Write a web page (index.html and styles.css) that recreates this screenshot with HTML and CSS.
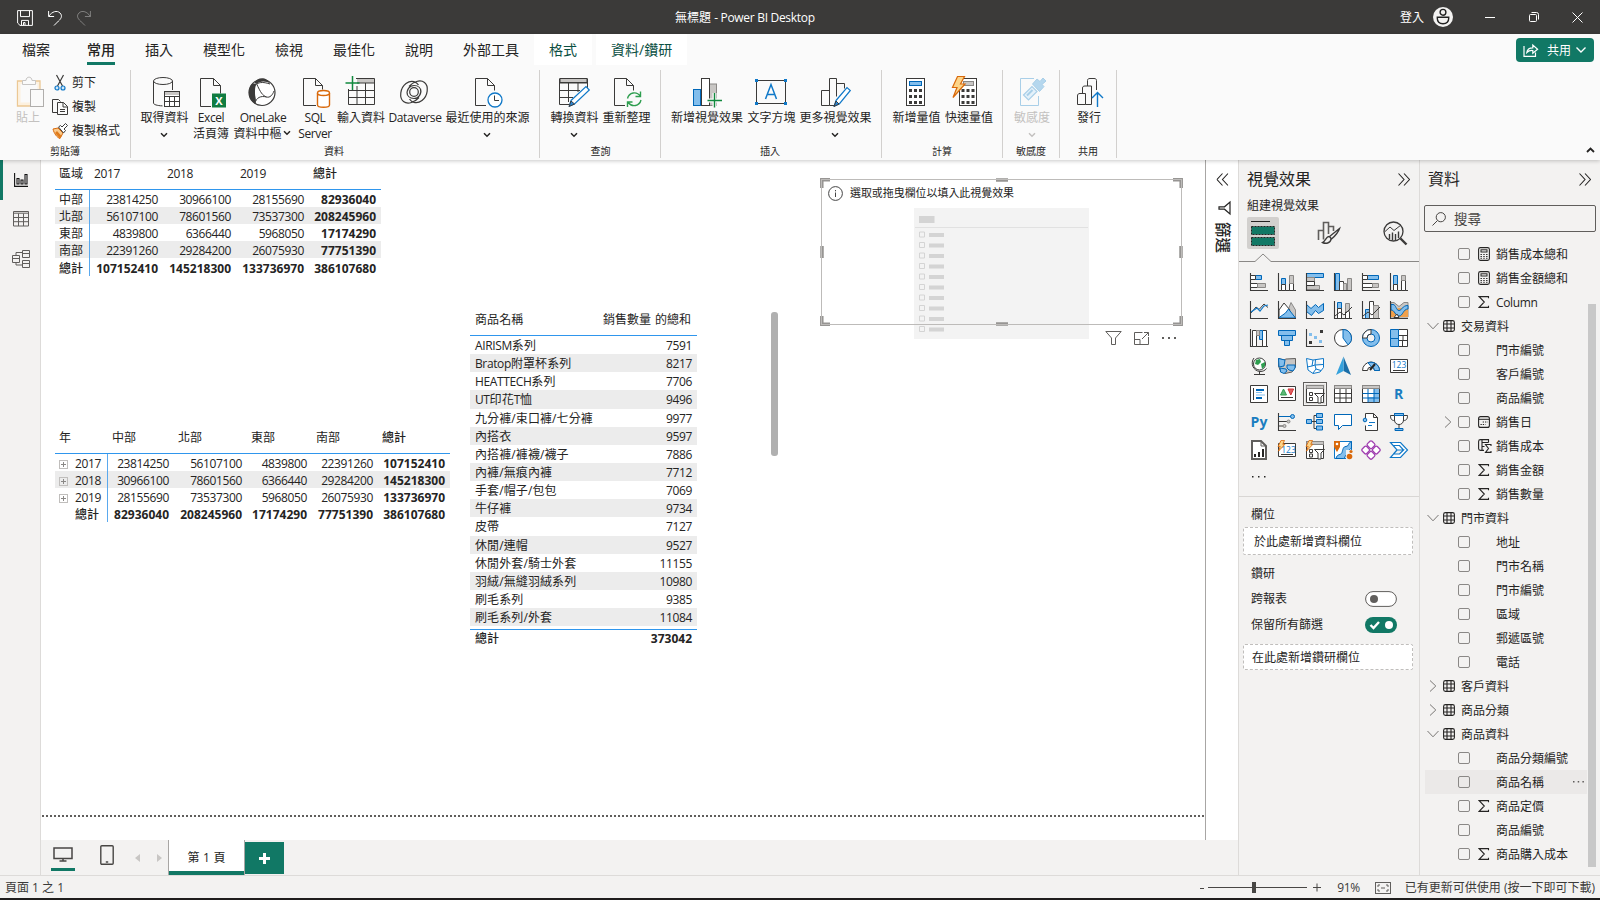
FILE: index.html
```html
<!DOCTYPE html>
<html lang="zh-Hant">
<head>
<meta charset="utf-8">
<title>無標題 - Power BI Desktop</title>
<link rel="stylesheet" href="styles.css">
</head>
<body>
<svg class="sprite" width="0" height="0">
  <symbol id="chev-d" viewBox="0 0 8 6"><path d="M1 1.2 4 4.2 7 1.2" fill="none" stroke="currentColor" stroke-width="1.5"/></symbol>
  <symbol id="dbl" viewBox="0 0 12 13"><path d="M.5.5 6 6.5.5 12.5M6 .5l5.5 6-5.5 6" fill="none" stroke="currentColor" stroke-width="1.1"/></symbol>
  <symbol id="open" viewBox="0 0 12 12"><path d="M.5 3 6 8.8 11.5 3" fill="none" stroke="#797775"/></symbol>
  <symbol id="closed" viewBox="0 0 12 12"><path d="M3 .5 8.8 6 3 11.5" fill="none" stroke="#797775"/></symbol>
  <symbol id="tbl" viewBox="0 0 12 12"><path d="M2.5.6h7a1.9 1.9 0 0 1 1.9 1.9v7a1.9 1.9 0 0 1-1.9 1.9h-7A1.9 1.9 0 0 1 .6 9.5v-7A1.9 1.9 0 0 1 2.5.6zM4 .6v10.8M8 .6v10.8M.6 4h10.8M.6 8h10.8" fill="none" stroke="#252423" stroke-width="1.1"/></symbol>
  <symbol id="sum" viewBox="0 0 12 12"><path d="M10.5 2.3V.6H1.2L6.3 6l-5.1 5.4h9.3V9.7" fill="none" stroke="#252423" stroke-width="1.1"/></symbol>
  <symbol id="calc" viewBox="0 0 12 14"><rect x=".6" y=".6" width="10.8" height="12.8" rx="1.8" fill="none" stroke="#252423" stroke-width="1.1"/><rect x="3" y="2.8" width="6" height="2.2" fill="none" stroke="#252423"/><path d="M2.5 7.5h7M2.5 9.5h7M2.5 11.3h7" stroke="#252423" stroke-dasharray="1.4 1.4"/></symbol>
  <symbol id="axis" viewBox="0 0 20 20"><path d="M1.5 1v17.5H19" fill="none" stroke="#3b3a39" stroke-width="1.1"/></symbol>
  <symbol id="bolt" viewBox="0 0 10 14"><path d="M4.5.5h4L6.5 5H9L1.5 13 3.5 7.5H1z" fill="#fcd58a" stroke="#d9690b"/></symbol>
</svg>

<div class="app">
  <header class="titlebar">
    <div class="quick">
      <svg width="16" height="16" viewBox="0 0 16 16" class="w"><path d="M.6.6h14.8v14.8H3L.6 13zM3.5.6v6h9v-6M4.500 15.400v-5h7v5M6.500 15v-2.500h1.500V15"/></svg>
      <svg width="14" height="16" viewBox="0 0 14 16" class="w"><path d="M.6 1v5.500h5.500M.8 6.200C4 1.500 9 0 12 3s.8 6-1.500 8L6 15.500"/></svg>
      <svg width="14" height="16" viewBox="0 0 14 16" class="w dim"><path d="M13.400 1v5.500H7.900M13.200 6.200C10 1.500 5 0 2 3s-.8 6 1.500 8L8 15.500"/></svg>
    </div>
    <div class="apptitle">無標題 <span class="lat">- Power BI Desktop</span></div>
    <div class="winctl">
      <span class="login">登入</span>
      <svg width="20" height="20" viewBox="0 0 20 20"><circle cx="10" cy="10" r="10" fill="#f3f2f1"/><circle cx="10" cy="5.3" r="2.9" fill="none" stroke="#222" stroke-width="1.4"/><path d="M4.300 10.300h11.400v1c0 3.500-2.500 5.400-5.700 5.400s-5.700-1.900-5.700-5.400z" fill="none" stroke="#222" stroke-width="1.4"/></svg>
      <svg class="min w" width="10" height="10" viewBox="0 0 10 10"><path d="M0 5.500h10"/></svg>
      <svg class="res w" width="10" height="10" viewBox="0 0 10 10"><rect x=".5" y="2.5" width="7" height="7" rx="1"/><path d="M2.500.5h5a2 2 0 0 1 2 2v5"/></svg>
      <svg class="cls w" width="11" height="11" viewBox="0 0 11 11"><path d="m.5.5 10 10m0-10-10 10"/></svg>
    </div>
  </header>

  <section class="ribbon">
    <nav class="tabs">
      <span class="file">檔案</span><span class="on">常用</span><span>插入</span><span>模型化</span><span>檢視</span><span>最佳化</span><span>說明</span><span>外部工具</span>
      <span class="ctx">格式</span><span class="ctx">資料/鑽研</span>
      <button class="share"><svg width="16" height="14" viewBox="0 0 16 14" class="w"><path d="M1 3v10.400h11.500V9.500M3.800 9.500c.4-3 2.500-4.700 6-4.700V2l4.800 4.200-4.800 4V7.500c-2.800-.2-4.500.4-6 2z" stroke-width="1.2"/></svg><span>共用</span><svg width="10" height="6" viewBox="0 0 10 6" class="w"><path d="m.5.5 4.500 4.500L9.500.5" stroke-width="1.4"/></svg></button>
    </nav>
    <div class="groups">
      <div class="group g-clip">
        <div class="items">
          <div class="btn off paste"><svg class="ic" viewBox="0 0 32 32"><path d="M8 5H2.500v25H16M20 5h5v8" fill="#fdf3e2" stroke="#ecc894" stroke-width="1.3"/><path d="M3.500 6H24v8h-8v15H3.500z" fill="#fdf1df"/><path d="M5.500 8h17v6H16v12.500H5.500z" fill="#fafafa"/><path d="M7.500 8.500v-4H11c.2-4.500 5.800-4.500 6 0h3.500v4z" fill="#fafafa" stroke="#c8c6c4"/><rect x="15.5" y="13.5" width="13" height="17" fill="#fafafa" stroke="#b0aeac"/></svg><span>貼上</span></div>
          <div class="small">
            <div><svg width="16" height="16" viewBox="0 0 16 16"><path d="M4.500 0 10.500 11M11.500 0l-6 11" stroke="#3b3a39" stroke-width="1.2"/><circle cx="5" cy="13" r="2" fill="#cfe6f8" stroke="#0f78c8" stroke-width="1.2"/><circle cx="11" cy="13" r="2" fill="#cfe6f8" stroke="#0f78c8" stroke-width="1.2"/></svg>剪下</div>
            <div><svg width="16" height="16" viewBox="0 0 16 16" class="k"><path d="M5.500 13.500H.5v-13h6l2 2M5.500 3.500h6l4 4v8h-10zM11 3.500V8h4.500M8 10.500h5M8 12.500h5"/></svg>複製</div>
            <div><svg width="16" height="16" viewBox="0 0 16 16"><path d="M1 6l5-1 5 5-3 5.500c-3-1-6-5-7-9.500z" fill="#f9c98b" stroke="#d9690b"/><path d="m5 8 4.500 5L8 15.500 3 10z" fill="#e07b1a"/><path d="m6.500 4 2-1.500L10 4l3.500-3.500 2 2L12 6l1.500 1.500L11.500 10z" fill="#fff" stroke="#3b3a39"/></svg>複製格式</div>
          </div>
        </div>
        <div class="gname">剪貼簿</div>
      </div>
      <div class="group g-data">
        <div class="items">
          <div class="btn w55"><svg class="ic k" viewBox="0 0 32 32"><path d="M5.500 5v22c0 1.600 3.500 2.600 9 2.900M24.500 5v9"/><ellipse cx="15" cy="5" rx="9.500" ry="3.500"/><rect x="16.500" y="15.500" width="15" height="15" fill="#fff"/><path d="M16.500 17.500h15" stroke="#c8c6c4" stroke-width="3"/><path d="M16.500 15.500h15v15h-15zM16.500 20.500h15M16.500 25.500h15M21.500 20v10M26.500 20v10"/></svg><span>取得資料</span><svg class="ch"><use href="#chev-d"/></svg></div>
          <div class="btn w38"><svg class="ic k" viewBox="0 0 32 32"><path d="M17 30.500H6.500v-28h13l7 7v8M19.500 2.500v7h7"/><rect x="18" y="17.500" width="14" height="14" fill="#107c41" stroke="none"/><text x="25" y="28.500" class="xl">X</text></svg><span class="lat">Excel</span><span>活頁簿</span></div>
          <div class="btn w66"><svg class="ic" viewBox="0 0 32 32"><circle cx="16" cy="16.500" r="13" fill="#fff" stroke="#3b3a39" stroke-width="1.2"/><path d="M5 9C1 16 3 24 9 27.500c2-4 0-6 0-10S9 10 10.500 8.500C8.500 7 7 7.500 5 9z" fill="#3b3a39"/><path d="M8.500 6.500C11 1 21 0 24.500 8 20 4.500 14 5 10 8z" fill="#3b3a39"/><path d="M10.500 7.500c4 9 6 12 10 13.500 3.500 1 6-2 7.500-6M9 27.500c1-6 6-8 11.500-6.500M24 8c-6-2-10-2-13.500 0" fill="none" stroke="#3b3a39"/></svg><span class="lat">OneLake</span><span class="hub">資料中樞<svg class="ch in"><use href="#chev-d"/></svg></span></div>
          <div class="btn w38"><svg class="ic k" viewBox="0 0 32 32"><path d="M18 29.500H5.500v-27h12l7 7v4M17.500 2.500v7h7"/><path d="M19.500 17v12c0 3 12 3 12 0V17" fill="#fff" stroke="#d9690b" stroke-width="1.4"/><ellipse cx="25.500" cy="17" rx="6" ry="2.500" fill="#fff" stroke="#d9690b" stroke-width="1.4"/></svg><span class="lat">SQL</span><span class="lat">Server</span></div>
          <div class="btn w54"><svg class="ic k" viewBox="0 0 32 32"><path d="M13 3h17v4H13z" fill="#c8c6c4" stroke="none"/><path d="M12 2.500h18.500v26h-26V13M13 7h17.500M4.500 14.500h26M4.500 21.500h26M13 10v18.500M21.500 7v21.500"/><path d="M8.500 0v14M1.500 7h14" stroke="#10893e" stroke-width="1.5"/></svg><span>輸入資料</span></div>
          <div class="btn w54"><svg class="ic k" viewBox="0 0 32 32" stroke-width="1.2"><circle cx="16" cy="16" r="4.300"/><path d="M21 21.500C17 26 10 29 5.500 25.500S2 12 8 7.500s11-1 12.500 1.500M11 10.500C15 6 22 3 26.500 6.500S30 20 24 24.500s-11 1-12.500-1.500M9.500 19c-1.500-5 2-9.500 6.500-9.500s7 3 7 6.500M22.500 13c1.500 5-2 9.500-6.500 9.500s-7-3-7-6.500"/></svg><span class="lat">Dataverse</span></div>
          <div class="btn w91"><svg class="ic k" viewBox="0 0 32 32"><path d="M15 29.500H4.500v-27h12l7 7v5M16.500 2.500v7h7"/><circle cx="24" cy="24" r="7" fill="#fff" stroke="#0f78c8" stroke-width="1.3"/><path d="M23.500 19.500v5H28"/></svg><span>最近使用的來源</span><svg class="ch"><use href="#chev-d"/></svg></div>
        </div>
        <div class="gname">資料</div>
      </div>
      <div class="group g-query">
        <div class="items">
          <div class="btn w51"><svg class="ic k" viewBox="0 0 32 32"><path d="M2 2.500h27v4H2z" fill="#c8c6c4"/><path d="M29.500 2.500v10M1.500 2.500v26H11M1.500 7h28M1.500 14.500H22M1.500 21.500H15M10.500 7v19M20 7v9"/><path d="m13 24.500 15-14 3.300 3.500-14.800 14-5 2z" fill="#fff" stroke="#0f78c8" stroke-width="1.2"/><path d="m13 25 3.500 3-5.500 2.500z" fill="#2b88d8"/></svg><span>轉換資料</span><svg class="ch"><use href="#chev-d"/></svg></div>
          <div class="btn w53"><svg class="ic k" viewBox="0 0 32 32"><path d="M15 29.500H4.500v-27h12l7 7v5M16.500 2.500v7h7"/><path d="M17.500 22.500c1.500-6 9-8 13-2M30.500 15.500V20.500H25.500M31 24c-1.500 6-9 8-13 2M17.500 31v-5h5" stroke="#2e9e4f" stroke-width="1.4"/></svg><span>重新整理</span></div>
        </div>
        <div class="gname">查詢</div>
      </div>
      <div class="group g-ins">
        <div class="items">
          <div class="btn w80"><svg class="ic k" viewBox="0 0 32 32"><rect x="3.500" y="13.500" width="7" height="16" fill="#83beec" stroke="#0067b8"/><rect x="18.500" y="8" width="8" height="21.500" fill="#c8c6c4" stroke="#8a8886"/><rect x="11.500" y="2.500" width="8" height="27" fill="#fff"/><path d="M24.500 17v15M17.500 24.500h14.500" stroke="#fafafa" stroke-width="4"/><path d="M24.500 17v14.500M17.500 24.500h14.500" stroke="#10893e" stroke-width="1.4"/></svg><span>新增視覺效果</span></div>
          <div class="btn w49"><svg class="ic k" viewBox="0 0 32 32"><rect x="1.500" y="4.500" width="29" height="23"/><path d="M10.500 23 16 8.500 21.500 23M12.300 18.500h7.400" stroke="#0f78c8" stroke-width="1.5"/><path d="M0 3h3v3H0zM29 3h3v3h-3zM0 26h3v3H0zM29 26h3v3h-3z" fill="#0f78c8" stroke="none"/></svg><span>文字方塊</span></div>
          <div class="btn w79"><svg class="ic k" viewBox="0 0 32 32"><path d="M10.500 29.500h-8v-15h8M10.500 29.500v-27h7v18M17.500 7.500h8v5M10.500 29.500H16"/><path d="m17 24.500 11-13 3.300 3-11 13.500-5 2z" fill="#fff" stroke="#0f78c8" stroke-width="1.2"/><path d="m17 25 3 3-5 2.500z" fill="#2b88d8"/></svg><span>更多視覺效果</span><svg class="ch"><use href="#chev-d"/></svg></div>
        </div>
        <div class="gname">插入</div>
      </div>
      <div class="group g-calc">
        <div class="items">
          <div class="btn w53"><svg class="ic k" viewBox="0 0 32 32"><rect x="6.500" y="2.500" width="18" height="27" fill="#fff"/><rect x="9.500" y="5.500" width="12" height="4" fill="#83beec" stroke="#0067b8"/><path d="M9 14.500h13.500M9 20.500h13.500M9 26.500h13.500" stroke-width="3" stroke-dasharray="3 2"/></svg><span>新增量值</span></div>
          <div class="btn w52"><svg class="ic k" viewBox="0 0 32 32"><rect x="7.500" y="2.500" width="17" height="27" fill="#fff"/><rect x="11.500" y="5.500" width="10" height="4" fill="#c8c6c4" stroke="#8a8886"/><path d="M9.500 14.500H23M9.500 20.500H23M9.500 26.500H23" stroke-width="3" stroke-dasharray="3 2"/><path d="M5.500.5h7L8.500 8H13L1 21.500 5 11.500H.5z" fill="#fcd58a" stroke="#d9690b" stroke-width="1.2"/></svg><span>快速量值</span></div>
        </div>
        <div class="gname">計算</div>
      </div>
      <div class="group g-sens">
        <div class="items">
          <div class="btn off w56"><svg class="ic" viewBox="0 0 32 32" fill="none" stroke="#a9cfe8"><path d="M22.500 20v9.500h-18v-27H18"/><path d="m7.500 19 8.500-8.500 5 5-8.500 8.500z" fill="#e4f1fa" stroke-width="1.2"/><path d="m11 19.500 5.500-5.500" stroke-width="2"/><path d="m16.500 8 4.500-5 3 2.500 3-3.500 3 3-4 3.500 2 2-4.500 5z" fill="#b5d7ee"/></svg><span>敏感度</span><svg class="ch"><use href="#chev-d"/></svg></div>
        </div>
        <div class="gname">敏感度</div>
      </div>
      <div class="group g-pub">
        <div class="items">
          <div class="btn w56"><svg class="ic k" viewBox="0 0 32 32"><path d="M4.500 28.500v-8.500c0-2 1-2.500 2.500-2.500h5.500v11zM9.500 17.500V12c0-1.500 1-2 2.500-2h6.500v18.500h-6M14.500 10V4.500c0-1.500 1-2 2.500-2h4c1.500 0 2.500.5 2.500 2V14"/><path d="M24.500 31V17M19 22l5.500-5.500L30 22" stroke="#0f78c8" stroke-width="1.4"/></svg><span>發行</span></div>
        </div>
        <div class="gname">共用</div>
      </div>
      <svg class="collapse" width="9" height="6" viewBox="0 0 9 6"><path d="m1 5 3.500-3.500L8 5" fill="none" stroke="#252423" stroke-width="1.8"/></svg>
    </div>
  </section>

  <div class="body">
    <aside class="rail">
      <div class="on"><svg width="14" height="14" viewBox="0 0 14 14"><path d="M.6 0v13.400H14M3 5.500h2v5.500H3zM7 7h2v4H7zM11 1.500h2V11h-2z" fill="none" stroke="#111" stroke-width="1.1"/></svg></div>
      <div><svg width="16" height="16" viewBox="0 0 16 16" class="g"><path d="M.5.5h15v14.500H.5zM.5 2.200h15M.5 6.500h15M.5 10.700h15M5.500 2.500V15M10.500 2.500V15"/></svg></div>
      <div><svg width="18" height="18" viewBox="0 0 18 18" class="g"><path d="M.5 5.500h7v7h-7zM.5 8.500h7M10.500.5h7v7h-7zM10.500 3.500h7M10.500 10.500h7v7h-7zM10.500 13.500h7M4 5.500v-3h6.500M4 12.500v2.500h6.500"/></svg></div>
    </aside>

    <main class="report">
      <div class="canvas">
        <table class="viz t1">
          <tr><th>區域</th><th class="lat">2017</th><th class="lat">2018</th><th class="lat">2019</th><th class="m">總計</th></tr>
          <tr><td>中部</td><td>23814250</td><td>30966100</td><td>28155690</td><td class="b">82936040</td></tr>
          <tr class="alt"><td>北部</td><td>56107100</td><td>78601560</td><td>73537300</td><td class="b">208245960</td></tr>
          <tr><td>東部</td><td>4839800</td><td>6366440</td><td>5968050</td><td class="b">17174290</td></tr>
          <tr class="alt"><td>南部</td><td>22391260</td><td>29284200</td><td>26075930</td><td class="b">77751390</td></tr>
          <tr class="sumrow"><td class="m">總計</td><td class="b">107152410</td><td class="b">145218300</td><td class="b">133736970</td><td class="b">386107680</td></tr>
        </table>

        <table class="viz t2">
          <tr><th>年</th><th>中部</th><th>北部</th><th>東部</th><th>南部</th><th class="m">總計</th></tr>
          <tr><td><i class="exp"></i>2017</td><td>23814250</td><td>56107100</td><td>4839800</td><td>22391260</td><td class="b">107152410</td></tr>
          <tr class="alt"><td><i class="exp"></i>2018</td><td>30966100</td><td>78601560</td><td>6366440</td><td>29284200</td><td class="b">145218300</td></tr>
          <tr><td><i class="exp"></i>2019</td><td>28155690</td><td>73537300</td><td>5968050</td><td>26075930</td><td class="b">133736970</td></tr>
          <tr><td class="m ind">總計</td><td class="b">82936040</td><td class="b">208245960</td><td class="b">17174290</td><td class="b">77751390</td><td class="b">386107680</td></tr>
        </table>

        <div class="viz t3">
          <div class="r head"><span>商品名稱</span><span>銷售數量 的總和</span></div>
          <div class="r"><span><b class="lat">AIRISM</b>系列</span><span>7591</span></div>
          <div class="r"><span><b class="lat">Bratop</b>附罩杯系列</span><span>8217</span></div>
          <div class="r"><span><b class="lat">HEATTECH</b>系列</span><span>7706</span></div>
          <div class="r"><span><b class="lat">UT</b>印花<b class="lat">T</b>恤</span><span>9496</span></div>
          <div class="r"><span>九分褲/束口褲/七分褲</span><span>9977</span></div>
          <div class="r"><span>內搭衣</span><span>9597</span></div>
          <div class="r"><span>內搭褲/褲襪/襪子</span><span>7886</span></div>
          <div class="r"><span>內褲/無痕內褲</span><span>7712</span></div>
          <div class="r"><span>手套/帽子/包包</span><span>7069</span></div>
          <div class="r"><span>牛仔褲</span><span>9734</span></div>
          <div class="r"><span>皮帶</span><span>7127</span></div>
          <div class="r"><span>休閒/連帽</span><span>9527</span></div>
          <div class="r"><span>休閒外套/騎士外套</span><span>11155</span></div>
          <div class="r"><span>羽絨/無縫羽絨系列</span><span>10980</span></div>
          <div class="r"><span>刷毛系列</span><span>9385</span></div>
          <div class="r"><span>刷毛系列/外套</span><span>11084</span></div>
          <div class="r total"><span>總計</span><span>373042</span></div>
        </div>
        <div class="vscroll"></div>

        <div class="slicer">
          <svg class="ph" width="175" height="131" viewBox="0 0 175 131"><rect width="175" height="131" fill="#f3f3f3"/><rect x="5" y="8" width="15.500" height="7" fill="#d4d4d4"/><path d="M1 19.500h173" stroke="#e1e1e1"/>
            <g fill="none" stroke="#d4d4d4"><path d="M5.500 24h5v5h-5zM5.500 34.500h5v5h-5zM5.500 45h5v5h-5zM5.500 55.500h5v5h-5zM5.500 66h5v5h-5zM5.500 76.500h5v5h-5zM5.500 87h5v5h-5zM5.500 97.500h5v5h-5zM5.500 108h5v5h-5zM5.500 118.500h5v5h-5z"/><path stroke-width="4" d="M15 27h15M15 37.500h15M15 48h15M15 58.500h15M15 69h15M15 79.500h15M15 90h15M15 100.500h15M15 111h15M15 121.500h15"/></g></svg>
          <div class="hint"><svg width="15" height="15" viewBox="0 0 15 15"><circle cx="7.500" cy="7.500" r="6.900" fill="none" stroke="#444"/><path d="M7.500 6.500v4.500M7.500 4v1.300" stroke="#444"/></svg>選取或拖曳欄位以填入此視覺效果</div>
          <svg class="frame" width="363" height="148" viewBox="0 0 363 148" fill="none"><g stroke="#979593" stroke-width="3.500"><path d="M10 1.800H1.800V10M353 1.800h8.200V10M10 146.200H1.800V138M353 146.200h8.200V138M176 2h12M176 146h12M2 68v12M361 68v12"/></g><rect x="1.500" y="1.500" width="360" height="145" stroke="#bdbbb9"/></svg>
          <div class="tools">
            <svg width="17" height="14" viewBox="0 0 17 14" class="g"><path d="M.8.5h15.400L10.500 7v6.500h-4V7z"/></svg>
            <svg width="15" height="13" viewBox="0 0 15 13" class="g"><path d="M8.500.5H.5v12h14V5M.5 7.500h5.500v5M10 .5h4.500V4M14.500.5 8 7"/></svg>
            <svg width="16" height="4" viewBox="0 0 16 4"><path d="M1 1h2v2H1zM7 1h2v2H7zM13 1h2v2h-2z" fill="#605e5c"/></svg>
          </div>
        </div>
        <div class="pageline"></div>
      </div>
      <aside class="filters">
        <svg width="13" height="13" viewBox="0 0 12 13" class="flip"><use href="#dbl"/></svg>
        <svg width="13" height="14" viewBox="0 0 13 14" class="fun"><path d="M12 1v12L6.500 8.200H1V5.800h5.500z" fill="none" stroke="#252423" stroke-width="1.2"/></svg>
        <span>篩選</span>
      </aside>
      <footer class="pages">
        <div class="view on"><svg width="20" height="15" viewBox="0 0 20 15"><path d="M1 1h18v10.500H1zM10 11.500V14M6.500 14h7" fill="none" stroke="#484644" stroke-width="1.5"/></svg></div>
        <div class="view ph2"><svg width="14" height="20" viewBox="0 0 14 20"><rect x=".8" y=".8" width="12.400" height="18.400" rx="1" fill="none" stroke="#484644" stroke-width="1.4"/><path d="M5.800 17h2.400" stroke="#484644" stroke-width="1.5"/></svg></div>
        <svg class="ar" width="5" height="8" viewBox="0 0 5 8"><path d="M5 0v8L0 4z" fill="#c8c6c4"/></svg>
        <svg class="ar" width="5" height="8" viewBox="0 0 5 8"><path d="M0 0v8l5-4z" fill="#c8c6c4"/></svg>
        <div class="page">第 1 頁</div>
        <div class="add"><svg width="11" height="11" viewBox="0 0 11 11"><path d="M5.500 0v11M0 5.500h11" stroke="#fff" stroke-width="3"/></svg></div>
      </footer>
    </main>

    <aside class="vis">
      <div class="phead"><span>視覺效果</span><svg width="12" height="13"><use href="#dbl"/></svg></div>
      <div class="sub">組建視覺效果</div>
      <div class="modes">
        <div class="mode on"><svg width="26" height="28" viewBox="0 0 26 28"><path d="M1 2.500h19" stroke="#252423"/><rect x="1.500" y="7.500" width="23" height="8" fill="#117865" stroke="#252423" stroke-dasharray="2 1"/><rect x="1.500" y="18.500" width="23" height="8" fill="#117865" stroke="#252423" stroke-dasharray="2 1"/></svg></div>
        <div class="mode"><svg width="24" height="24" viewBox="0 0 24 24" class="k"><path d="M1.500 19v-9.500h5v9M6.500 16V1.500h5V13M11.500 5.500h5V10" stroke="#605e5c" stroke-width="1.6"/><path d="M22.500 7.500 12.500 15.500l2 2.500C17.500 15.500 21 12 22.500 7.500zM12 15.500c-3 0-3 4-6.500 6 3 1.500 8 1 8.500-3.500" fill="#f3f2f1" stroke-width="1.4"/></svg></div>
        <div class="mode"><svg width="26" height="26" viewBox="0 0 26 26" class="k"><circle cx="11.500" cy="11.500" r="9.500" stroke-width="1.3"/><path d="M2.500 12 8 7l4 3.500L19 5"/><path d="M7.500 14v5M10.500 12.500v7.500M13.500 14v6M16.500 11.500V18" stroke-width="1.4"/><path d="m18.500 18.500 6 6" stroke-width="2.400"/></svg></div>
      </div>
      <svg class="notch" width="180" height="9" viewBox="0 0 180 9"><path d="M0 8.500h16l8-7.500 8 7.500h148" fill="none" stroke="#8a8886"/></svg>
      <div class="gallery">
        <svg viewBox="0 0 20 20"><use href="#axis"/><path class="bl" d="M6.500 3.500h6v4h-6z"/><path class="wh" d="M1.500 3.500h5v4h-5zM1.500 11.500h7v4h-7z"/><path class="gy" d="M8.500 11.500h8v4h-8z"/></svg>
        <svg viewBox="0 0 20 20"><use href="#axis"/><path class="bl" d="M4.500 6.500h4v6h-4z"/><path class="wh" d="M4.500 12.500h4v6h-4zM12.500 11.500h4v7h-4z"/><path class="gy" d="M12.500 3.500h4v8h-4z"/></svg>
        <svg viewBox="0 0 20 20"><path class="bl" d="M1.500 1.500h17v4h-17z"/><path class="gy" d="M1.500 5.500h8v4h-8zM1.500 13.500h13v4h-13z"/><path class="wh" d="M1.500 9.500h8v4h-8z"/><use href="#axis"/></svg>
        <svg viewBox="0 0 20 20"><path class="bl" d="M2.500 1.500h4v17h-4z"/><path class="wh" d="M6.500 9.500h4v9h-4z"/><path class="gy" d="M10.500 11.500h3v7h-3zM14.500 6.500h4v12h-4z"/><use href="#axis"/></svg>
        <svg viewBox="0 0 20 20"><use href="#axis"/><path class="bl" d="M6.500 3.500h11v4h-11z"/><path class="wh" d="M1.500 3.500h5v4h-5zM1.500 11.500h10v4h-10z"/><path class="gy" d="M11.500 11.500h6v4h-6z"/></svg>
        <svg viewBox="0 0 20 20"><use href="#axis"/><path class="bl" d="M4.500 3.500h4v9h-4z"/><path class="wh" d="M4.500 12.500h4v6h-4zM12.500 8.500h4v10h-4z"/><path class="gy" d="M12.500 3.500h4v5h-4z"/></svg>

        <svg viewBox="0 0 20 20"><use href="#axis"/><path class="ln" d="m2 13 5-6 3 2.500L15 4l4 3.500"/><path class="lb" d="m2 12 6-4 3 3 4-5 4-1"/></svg>
        <svg viewBox="0 0 20 20"><path class="gy" d="m8 18 6-15.500L18.500 10v8z"/><path class="wh" d="M2 10 7 3l6 7-6 8H2z"/><path class="bl" d="m1.500 18 7-5 3-4 7 9z"/><use href="#axis"/></svg>
        <svg viewBox="0 0 20 20"><path class="bl" d="M1.500 4.500 6 8.500l4.500-4 3 3 5-4v7l-5 3-3-3-4 5-5-4z"/><use href="#axis"/></svg>
        <svg viewBox="0 0 20 20"><path class="bl" d="M4.500 2.500h4v6h-4z"/><path class="wh" d="M4.500 8.500h4v10h-4zM12.500 11.500h4v7h-4z"/><path class="gy" d="M12.500 3.500h4v8h-4z"/><use href="#axis"/><path class="ln" d="m2 16 5-4 4 3 8-8"/></svg>
        <svg viewBox="0 0 20 20"><path class="bl" d="M4.500 9.500h4v9h-4z"/><path class="wh" d="M8.500 1.500h4v17h-4z"/><path class="gy" d="M12.500 5.500h5v13h-5z"/><use href="#axis"/><path class="ln" d="m2 16 5-4 4 3 8-8"/></svg>
        <svg viewBox="0 0 20 20"><path class="gy" d="M2 2.500h3l5 4 5-4h4V17H2z"/><path d="M2 9h4l4-1h9v9H2z" fill="#f0a04b"/><path class="bl" d="M2 4.500h2c3 0 3 6 6 6s3-5 9-5V9c-5 0-5 7-9 7s-4-6-8-6z"/><path class="wh" d="M5 17.500 8 14l2 3.500z"/><use href="#axis"/></svg>

        <svg viewBox="0 0 20 20"><use href="#axis"/><path class="wh" d="M3.500 2.500h4v16h-4zM13.500 2.500h4v16h-4z"/><path class="bl" d="M10.500 2.500h3v9h-3z"/><path class="gy" d="M7.500 2.500h3v5h-3z"/></svg>
        <svg viewBox="0 0 20 20"><path class="bl" d="M1.500 2.500h17v5h-17zM4.500 7.500h11v5h-11zM7.500 12.500h5v5h-5z"/></svg>
        <svg viewBox="0 0 20 20"><use href="#axis"/><path d="M4 5h3v3H4zM9 8h3v3H9zM14 12h3v3h-3z" fill="#83beec"/><path d="M15 2h3v3h-3zM4 13h3v3H4z" fill="#3b3a39"/></svg>
        <svg viewBox="0 0 20 20"><circle class="wh" cx="10" cy="10" r="8.500"/><path class="bl" d="M10 10V1.500a8.500 8.500 0 0 1 5 15.300z"/></svg>
        <svg viewBox="0 0 20 20"><circle class="bl" cx="10" cy="10" r="8.500"/><circle cx="10" cy="10" r="4" fill="#f3f2f1" stroke="#0067b8"/><path class="wh" d="M10 1.500A8.500 8.500 0 0 0 1.500 10H6a4 4 0 0 1 4-4z"/></svg>
        <svg viewBox="0 0 20 20"><path class="wh" d="M9.500 1.500h9v17h-9zM9.500 7.500h9M14 7.500v5M9.500 12.500h9M13.500 12.500v6"/><path class="bl" d="M1.500 1.500h8v9h-8zM1.500 10.500h8v8h-8z"/></svg>

        <svg viewBox="0 0 20 20"><circle cx="10.500" cy="8" r="6" fill="#fff" stroke="#3b3a39"/><path d="M7 4l4-1 1 3-3 3-3-1zM12 8l4-2v4l-3 3z" fill="#2e9e4f"/><path class="ln" d="M5 2C1 7 4 15 11 15.500c3 0 5-1 6.500-3M10.500 15.500v3M5 18.500h11"/></svg>
        <svg viewBox="0 0 20 20"><path d="M1.500 2.500 7 4l2-1 9.500-.5v8.500L15 16l-7 1.500L3 14l-1.500-4z" fill="#c8c6c4" stroke="#605e5c"/><path class="bl" d="M1.500 2.500 8 4l-1 6-5 1zM10 9h8v3l-2 3-4-1-2-2zM3 12l6 1 1 2-3 2.500L3.500 16z"/></svg>
        <svg viewBox="0 0 20 20"><path d="M1.500 2.500 8 4l10.500-1.500v9L15 16l-7 1.500L3 14zM8 4 7 10l-5 1M10.500 3.500 10 9l8-.5M7 10l3-1 1 4-3 4M11 13l5 1.500" fill="#fff" stroke="#0f78c8"/></svg>
        <svg viewBox="0 0 20 20"><path d="M10.500.5 18 19l-7.500-4z" fill="#1b6ea8"/><path d="M10.500.5 3 19l7.500-4z" fill="#35a2dd"/></svg>
        <svg viewBox="0 0 20 20"><path class="wh" d="M1.500 14.500a8.500 8.500 0 0 1 17 0h-5a3.500 3.500 0 0 0-7 0z"/><path class="bl" d="M7 6.800a8.500 8.500 0 0 1 11.500 7.700h-5a3.500 3.500 0 0 0-3-3.500z"/><path d="m9 14 5-6" stroke="#252423" stroke-width="2"/></svg>
        <svg viewBox="0 0 20 20"><path class="wh" d="M1.500 3.500h17v13h-17z"/><text x="10" y="12.200" class="n">123</text><path class="ln" d="M4 14.500h12"/></svg>

        <svg viewBox="0 0 20 20"><path class="wh" d="M1.500 1.500h17v17h-17z"/><path class="ln" d="M4.500 4v12"/><path d="M7 6h8M7 14h6" stroke="#0067b8" stroke-width="2"/><path d="M7 8.500h6M7 11h9" stroke="#83beec"/></svg>
        <svg viewBox="0 0 20 20"><path class="wh" d="M1.500 2.500h17v14h-17z"/><path d="m3.500 11 3-6 3 6z" fill="#5fb878" stroke="#2e9e4f"/><path d="m11 5 2.800 6 2.800-6z" fill="#e06060" stroke="#d13438"/><path class="ln" d="M4 13.500h12"/></svg>
        <svg viewBox="0 0 20 20" class="sel"><path class="wh" d="M1.500 1.500h17v17h-17z"/><path d="M1.500 1.500h17v3h-17z" class="gy"/><path class="ln" d="M4.500 8.500h3v3h-3zM4.500 13.500h3v3h-3z"/><path class="wh" d="M9.500 9.500h10L16 13v6h-3v-6z"/></svg>
        <svg viewBox="0 0 20 20"><path class="wh" d="M1.500 1.500h17v17h-17z"/><path class="ln" d="M1.500 9.500h17M1.500 14h17M7 4.500v14M13 4.500v14"/><path class="gy" d="M1.500 1.500h17v3h-17z"/></svg>
        <svg viewBox="0 0 20 20"><path class="wh" d="M1.500 1.500h17v17h-17z"/><path d="M7 13h6v5H7zM13 5h5v13h-5z" fill="#83beec"/><path d="M1.500 9.500h17M1.500 14h17M7 4.500v14M13 4.500v14" stroke="#0067b8"/><path class="gy" d="M1.500 1.500h17v3h-17z"/></svg>
        <svg viewBox="0 0 20 20"><text x="9.500" y="14.500" class="t">R</text></svg>

        <svg viewBox="0 0 20 20"><text x="10" y="14.500" class="t py">Py</text></svg>
        <svg viewBox="0 0 20 20"><use href="#axis"/><path d="M2 4.500h12" stroke="#0067b8"/><circle class="bl" cx="15.500" cy="4.500" r="2"/><path class="ln" d="M2 9.500h8M2 14h4"/><circle class="gy" cx="11.500" cy="9.500" r="1.500"/><circle class="gy" cx="7.500" cy="14" r="1.500"/></svg>
        <svg viewBox="0 0 20 20"><path class="ln" d="M6 9.500h6M9 3.500h3M9 16.500h3M9 3.500v13"/><path class="bl" d="M1.500 7.500h5v4h-5zM11.500 1.500h6v4h-6zM11.500 7.500h6v4h-6zM11.500 14h6v4h-6z"/></svg>
        <svg viewBox="0 0 20 20"><path d="M1.500 2.500h17v11h-9l-4 4v-4h-4z" fill="#fff" stroke="#0067b8"/></svg>
        <svg viewBox="0 0 20 20"><path class="wh" d="M4.500 1.500h8l4 4v13h-12v-5M12.500 1.500v4h4M4.500 6V1.500"/><circle class="bl" cx="4" cy="8" r="1.800"/><path d="M8 10.500h6M7 13.500h4" stroke="#0f78c8"/></svg>
        <svg viewBox="0 0 20 20"><path class="wh" d="M5.500 1.500h9V8c0 6-9 6-9 0zM5.500 3.500h-4c0 4 1.500 5 4 5M14.500 3.500h4c0 4-1.500 5-4 5M10 12.500V16"/><path class="bl" d="M5.500 1.500h9v2h-9zM6 16.500h8v2H6z"/></svg>

        <svg viewBox="0 0 20 20"><path d="M3 1h9l5 5v13H3z" fill="#fff" stroke="#605e5c" stroke-width="2"/><path d="M12 1v5h5" fill="none" stroke="#605e5c"/><path d="M5 14h2v3H5zM9 12h2v5H9zM13 9h2v8h-2z" fill="#252423"/></svg>
        <svg viewBox="0 0 20 20"><path class="wh" d="M1.500 3.500h17v13h-17z"/><text x="11.500" y="12.700" class="n">123</text><path class="ln" d="M4 14.500h12"/><use href="#bolt" width="9" height="12"/></svg>
        <svg viewBox="0 0 20 20"><path class="wh" d="M1.500 1.500h17v17h-17z"/><path d="M1.500 1.500h17v3h-17z" class="gy"/><path class="ln" d="M4.500 9.500h3v3h-3zM4.500 14h3v3h-3z"/><path class="wh" d="M9.500 9.500h10L16 13v6h-3v-6z"/><use href="#bolt" width="9" height="12"/></svg>
        <svg viewBox="0 0 20 20"><path d="M1.500 1.500h17v17h-17z" fill="#fff" stroke="#0f78c8"/><path class="bl" d="M3 18.500c1-5 5-3 6-6s1-6 4-6 2-4 5.500-5v7c-3 0-3 5-5 6s-1 4-3 4z"/><path d="M1 1h6v6l-3 5-3-5z" fill="#d9690b"/><circle cx="4" cy="4" r="1.300" fill="#fff"/><path d="M13 10h7v10h-7z" fill="#f3f2f1"/><circle cx="16.500" cy="16.500" r="2.800" fill="#d9690b"/><circle cx="18" cy="11.500" r="1.600" fill="#d9690b"/></svg>
        <svg viewBox="0 0 20 20"><g fill="#fff" stroke="#a03fb0" stroke-width="1.3"><rect x="6.800" y="1.500" width="6.400" height="6.400" rx="1.500" transform="rotate(45 10 4.700)"/><rect x="1.500" y="6.800" width="6.400" height="6.400" rx="1.500" transform="rotate(45 4.700 10)"/><rect x="12.100" y="6.800" width="6.400" height="6.400" rx="1.500" transform="rotate(45 15.300 10)"/><rect x="6.800" y="12.100" width="6.400" height="6.400" rx="1.500" transform="rotate(45 10 15.300)"/></g></svg>
        <svg viewBox="0 0 20 20"><path d="M1.500 2.500h10l7 7.500-7 7.500h-10L4.500 14h6l4-4H8zM4.500 5.500h6l4 4.500M8 10l-3.500 4" fill="#fff" stroke="#0f78c8" stroke-width="1.2"/></svg>
      </div>
      <svg class="dots" width="16" height="4" viewBox="0 0 16 4"><path d="M1 1h1.500v1.500H1zM7 1h1.500v1.500H7zM13 1h1.500v1.500H13z" fill="#252423"/></svg>
      <div class="wells">
        <div class="wl">欄位</div>
        <div class="drop d1">於此處新增資料欄位</div>
        <div class="wl l2">鑽研</div>
        <div class="opt">跨報表<svg width="32" height="16" viewBox="0 0 32 16"><rect x=".6" y=".6" width="30.800" height="14.800" rx="7.400" fill="#fff" stroke="#605e5c"/><circle cx="9" cy="8" r="4" fill="#605e5c"/></svg></div>
        <div class="opt">保留所有篩選<svg width="32" height="16" viewBox="0 0 32 16"><rect width="32" height="16" rx="8" fill="#117865"/><path d="m5.500 8 3 3L14 5" fill="none" stroke="#fff" stroke-width="2.400"/><circle cx="24" cy="8" r="4" fill="#fff"/></svg></div>
        <div class="drop d2">在此處新增鑽研欄位</div>
      </div>
    </aside>

    <aside class="data">
      <div class="phead"><span>資料</span><svg width="12" height="13"><use href="#dbl"/></svg></div>
      <div class="search"><svg width="14" height="14" viewBox="0 0 14 14"><circle cx="8.800" cy="5.200" r="4.600" fill="none" stroke="#484644"/><path d="M5.500 8.500.5 13.500" stroke="#484644"/></svg>搜尋</div>
      <div class="tree">
        <div class="f"><i></i><em><svg width="12" height="14"><use href="#calc"/></svg></em>銷售成本總和</div>
        <div class="f"><i></i><em><svg width="12" height="14"><use href="#calc"/></svg></em>銷售金額總和</div>
        <div class="f"><i></i><em><svg width="12" height="12"><use href="#sum"/></svg></em><span class="lat">Column</span></div>
        <div class="t"><svg><use href="#open"/></svg><svg><use href="#tbl"/></svg>交易資料</div>
        <div class="f"><i></i><em></em>門市編號</div>
        <div class="f"><i></i><em></em>客戶編號</div>
        <div class="f"><i></i><em></em>商品編號</div>
        <div class="f date"><svg class="dc" width="12" height="12"><use href="#closed"/></svg><i></i><em><svg width="12" height="12" viewBox="0 0 12 12"><rect x=".6" y=".6" width="10.800" height="10.800" rx="2" fill="none" stroke="#252423" stroke-width="1.1"/><path d="M.6 3.300h10.800" stroke="#252423"/><path d="M4.700 6h5M2.500 8.500h5" stroke="#252423" stroke-width="1.2" stroke-dasharray="1.300 1"/></svg></em>銷售日</div>
        <div class="f"><i></i><em><svg width="14" height="14" viewBox="0 0 14 14"><path d="M6 11.400H2.500A1.900 1.900 0 0 1 .6 9.500v-7A1.900 1.900 0 0 1 2.500.6h8v3M4 .6v10.800M4 3.500h6.500M4 7.500h2.500M13 7V5.500H7.500L10.500 9.500l-3 3.900H13V12" fill="none" stroke="#252423" stroke-width="1.1"/></svg></em>銷售成本</div>
        <div class="f"><i></i><em><svg width="12" height="12"><use href="#sum"/></svg></em>銷售金額</div>
        <div class="f"><i></i><em><svg width="12" height="12"><use href="#sum"/></svg></em>銷售數量</div>
        <div class="t"><svg><use href="#open"/></svg><svg><use href="#tbl"/></svg>門市資料</div>
        <div class="f"><i></i><em></em>地址</div>
        <div class="f"><i></i><em></em>門市名稱</div>
        <div class="f"><i></i><em></em>門市編號</div>
        <div class="f"><i></i><em></em>區域</div>
        <div class="f"><i></i><em></em>郵遞區號</div>
        <div class="f"><i></i><em></em>電話</div>
        <div class="t"><svg><use href="#closed"/></svg><svg><use href="#tbl"/></svg>客戶資料</div>
        <div class="t"><svg><use href="#closed"/></svg><svg><use href="#tbl"/></svg>商品分類</div>
        <div class="t"><svg><use href="#open"/></svg><svg><use href="#tbl"/></svg>商品資料</div>
        <div class="f"><i></i><em></em>商品分類編號</div>
        <div class="f hov"><i></i><em></em>商品名稱<svg class="more" width="11" height="2" viewBox="0 0 11 2"><path d="M0 0h1.500v1.500H0zM4.700 0h1.500v1.500H4.700zM9.400 0h1.500v1.500H9.400z" fill="#605e5c"/></svg></div>
        <div class="f"><i></i><em><svg width="12" height="12"><use href="#sum"/></svg></em>商品定價</div>
        <div class="f"><i></i><em></em>商品編號</div>
        <div class="f"><i></i><em><svg width="12" height="12"><use href="#sum"/></svg></em>商品購入成本</div>
        <div class="thumb"></div>
      </div>
    </aside>
  </div>

  <footer class="status">
    <span>頁面 1 之 1</span>
    <div class="sr">
      <svg width="124" height="14" viewBox="0 0 124 14"><path d="M2 7.500h4M10 6.500h99M115 6.500h8M119 2.500v8" stroke="#484644" fill="none"/><rect x="54" y="1" width="4" height="11" fill="#484644"/></svg>
      <span class="pct lat">91%</span>
      <svg width="16" height="12" viewBox="0 0 16 12" class="g"><rect x=".5" y=".5" width="15" height="11"/><path d="M3 5V3h2M11 3h2v2M13 7v2h-2M5 9H3V7M6 6h4"/></svg>
      <span>已有更新可供使用 (按一下即可下載)</span>
    </div>
  </footer>
</div>
</body>
</html>
```
FILE: styles.css
```css
* { box-sizing: border-box; }
body {
  margin: 0;
  width: 1600px;
  height: 900px;
  overflow: hidden;
  background: #1f1d1d;
  color: #252423;
  font: 12px/16px "Open Sans", "Noto Sans CJK TC", sans-serif;
}
.sprite { position: absolute; }
svg { display: block; flex: none; overflow: visible; }
.lat { letter-spacing: -0.38px; font-weight: 400; }
.k { fill: none; stroke: #3b3a39; }
.w { fill: none; stroke: #fff; }
.g { fill: none; stroke: #605e5c; }
.app { display: flex; flex-direction: column; height: 898px; background: #f3f2f1; }

/* title bar */
.titlebar { display: flex; align-items: center; justify-content: space-between; height: 34px; flex: none; background: #3b3a39; color: #fff; }
.quick { display: flex; gap: 15px; width: 674px; padding: 2px 0 0 17px; }
.quick .dim { opacity: .35; }
.apptitle { flex: 1; white-space: nowrap; padding: 1px 0 0 1px; }
.apptitle .lat { letter-spacing: -0.3px; }
.winctl { display: flex; align-items: center; }
.login { margin-right: 9px; padding-top: 1px; }
.min { margin: 0 34px 0 32px; }
.cls { margin: 0 17px 0 33px; }

/* ribbon */
.ribbon { position: relative; z-index: 2; height: 126px; flex: none; background: #fafafa; box-shadow: 0 1px 4px rgba(0, 0, 0, .22); }
.tabs { display: flex; height: 31px; font-size: 14px; line-height: 31px; }
.tabs > span { margin-left: 30px; }
.tabs .file { margin: 0 7px 0 22px; }
.tabs .on { border-bottom: 3px solid #117865; font-weight: 500; }
.tabs .ctx { background: #fff; color: #0b4f43; padding: 0 15px; margin-left: 4px; }
.tabs .file + .on { margin-left: 30px; }
.tabs span:nth-child(9) { margin-left: 15px; }
.share { display: flex; align-items: center; margin: 4px 6px 0 auto; width: 78px; height: 24px; padding: 0 0 0 7px; border: 0; border-radius: 4px; background: #117865; color: #fff; font: inherit; font-size: 12px; }
.share span { margin: 0 5px 0 8px; }
.groups { display: flex; height: 95px; padding: 5px 0 2px; }
.group { display: flex; flex-direction: column; border-right: 1px solid #d2d0ce; height: 88px; }
.items { display: flex; padding-top: 6px; height: 77px; }
.gname { text-align: center; font-size: 10px; line-height: 14px; }
.btn { display: flex; flex-direction: column; align-items: center; white-space: nowrap; }
.btn span { line-height: 16px; }
.ic { width: 32px; height: 32px; margin: 0 0 2px -2px; }
.ch { width: 8px; height: 6px; margin: 6px 0 0 -1px; }
.ch.in { display: inline-block; margin: 0 0 2px 1px; }
.hub { padding-right: 2px; }
.off { color: #c3c1bf; }
.xl { font: bold 11px "Open Sans"; fill: #fff; stroke: none; text-anchor: middle; }
.g-clip { width: 131px; }
.paste { width: 52px; align-items: flex-start; padding-left: 16px; }
.paste .ic { margin-left: -1px; }
.small { display: flex; flex-direction: column; gap: 8px; margin-top: -1px; }
.small div { display: flex; gap: 4px; align-items: center; }
.g-data { width: 409px; padding-left: 6px; }
.g-query { width: 121px; padding-left: 9px; }
.g-ins { width: 221px; padding-left: 6px; }
.g-calc { width: 121px; padding-left: 8px; }
.g-sens, .g-pub { width: 57px; }
.g-sens .btn, .g-pub .btn { padding-left: 2px; }
.g-sens .ic, .g-pub .ic { margin-left: 0; }
.g-query .gname, .g-calc .gname, .g-data .gname, .g-ins .gname { margin-left: -8px; }
.w55 { width: 55px; } .w38 { width: 38px; } .w66 { width: 66px; } .w54 { width: 54px; }
.w91 { width: 91px; } .w51 { width: 51px; } .w53 { width: 53px; } .w80 { width: 80px; }
.w49 { width: 49px; } .w79 { width: 79px; } .w52 { width: 52px; } .w56 { width: 56px; }
.collapse { margin: 77px 5px 0 auto; }

/* body */
.body { display: flex; height: 715px; flex: none; }
.rail { width: 41px; flex: none; border-right: 1px solid #dddbd9; }
.rail div { display: flex; height: 40px; align-items: center; padding: 0 0 2px 13px; }
.rail div:nth-child(3) { padding-left: 12px; }
.rail .on { border-left: 3px solid #117865; padding: 0 0 0 11px; }
.report { display: grid; grid-template: 680px 35px / 1164px 33px; width: 1197px; flex: none; }
.canvas { position: relative; background: #fff; }
.viz, .slicer, .vscroll, .pageline { position: absolute; }
.pageline { left: 1px; right: 1px; top: 655px; height: 2px; background: repeating-linear-gradient(90deg, #605e5c 0 2px, transparent 2px 4px); }
table.viz { border-collapse: separate; border-spacing: 0; table-layout: fixed; }
.viz th { font-weight: 400; text-align: left; padding: 6px 0 0 4px; border-bottom: 1px solid #2f96ed; vertical-align: top; height: 30px; }
.viz td { text-align: right; padding: 2px 5px 0 0; height: 17px; line-height: 15px; letter-spacing: -0.38px; white-space: nowrap; }
.viz td:first-child { text-align: left; padding-left: 4px; border-right: 1px solid #5aa9ee; }
.viz .alt td { background: #ececec; }
.viz td.b { font-weight: 700; letter-spacing: 0; }
.viz .m { font-weight: 500; letter-spacing: 0; }
.t1 { left: 14px; top: 0; width: 326px; }
.t1 th { width: 73px; }
.t1 th:first-child { width: 35px; }
.t1 th:last-child { width: 72px; }
.t1 td:first-child { letter-spacing: 0; }
.viz .sumrow td { padding-top: 3px; }
.t2 { left: 14px; top: 264px; width: 395px; }
.t2 th { width: 66px; }
.t2 th:nth-child(1) { width: 53px; }
.t2 th:nth-child(3) { width: 73px; }
.t2 th:nth-child(4) { width: 65px; }
.t2 th:nth-child(6) { width: 72px; }
.viz td.ind:first-child { padding-left: 20px; }
.exp { display: inline-block; width: 9px; height: 9px; margin: 0 7px -1px 0; border: 1px solid #c0bebc; background: linear-gradient(#8a8886, #8a8886) center / 5px 1px no-repeat, linear-gradient(#8a8886, #8a8886) center / 1px 5px no-repeat; }
.t3 { left: 429px; top: 146px; width: 227px; }
.r { display: flex; height: 18.15px; line-height: 20px; }
.r span { padding-left: 5px; width: 128px; white-space: nowrap; letter-spacing: .1px; }
.r span + span { width: 99px; padding: 0 5px 0 0; text-align: right; letter-spacing: -0.38px; }
.r:nth-child(odd) { background: #ececec; }
.r.head { height: 30px; padding-top: 4px; background: none; border-bottom: 1px solid #2f96ed; }
.r.head span + span { letter-spacing: 0; word-spacing: 1px; padding-right: 6px; }
.r.total { margin-top: 3px; border-top: 1px solid #2f96ed; font-weight: 500; background: none; line-height: 18px; }
.r.total span + span { font-weight: 700; letter-spacing: 0; }
.vscroll { left: 730px; top: 152px; width: 7px; height: 144px; border-radius: 3px; background: #b0b0b0; }
.slicer { left: 779px; top: 18px; width: 363px; height: 148px; }
.ph { position: absolute; left: 94px; top: 30px; }
.frame { position: absolute; left: 0; top: 0; }
.hint { position: relative; display: flex; align-items: center; gap: 7px; padding: 7px 0 0 8px; font-size: 10.950px; }
.tools { position: absolute; left: 285px; top: 153px; display: flex; align-items: center; gap: 12px; }
.filters { display: flex; flex-direction: column; align-items: center; background: #fff; border-left: 1px solid #a8a6a4; padding-top: 13px; }
.filters .flip { transform: scaleX(-1); }
.filters .fun { margin: 15px 0 7px 4px; }
.filters span { writing-mode: vertical-rl; text-orientation: sideways; font-size: 15.500px; font-weight: 500; line-height: 18px; padding-bottom: 1px; margin-left: 1px; }
.pages { grid-column: 1 / 3; display: flex; align-items: flex-start; }
.view { width: 24px; height: 31px; margin-left: 10px; padding: 7px 0 0 2px; }
.view.on { border-bottom: 3px solid #117865; }
.ph2 { margin-left: 23px; padding-top: 5px; }
.ar { margin: 14px 0 0 13px; }
.ar + .ar { margin-left: 17px; }
.page { width: 77px; height: 35px; margin-left: 6px; border: 1px solid #a8a6a4; border-width: 0 1px; box-shadow: inset 0 -4px #117865; background: #fff; text-align: center; line-height: 35px; word-spacing: .5px; }
.add { display: grid; place-items: center; width: 39px; height: 32px; margin-top: 2px; background: #117865; }

/* side panes */
.vis { width: 182px; flex: none; border: 1px solid #dddbd9; border-width: 0 1px; }
.phead { display: flex; justify-content: space-between; align-items: center; height: 38px; padding: 0 9px 0 8px; font-size: 16px; }
.phead span { padding-bottom: 1px; }
.sub { padding-left: 8px; line-height: 16px; }
.modes { display: flex; justify-content: space-between; padding: 3px 8px 0; height: 40px; }
.mode { display: grid; place-items: center; width: 32px; height: 32px; border-radius: 2px; }
.mode.on { background: #d2d0ce; }
.notch { margin-top: -1px; }
.gallery { display: grid; grid-template-columns: repeat(6, 28px); grid-auto-rows: 28px; place-items: center; padding: 6px 0 0 6px; }
.gallery svg { width: 20px; height: 20px; }
.gallery .sel { outline: 1px solid #605e5c; outline-offset: 1px; background: #e1dfdd; }
.bl { fill: #83beec; stroke: #0067b8; }
.gy { fill: #c8c6c4; stroke: #8a8886; }
.wh { fill: #fff; stroke: #3b3a39; }
.ln { fill: none; stroke: #3b3a39; }
.lb { fill: none; stroke: #0f78c8; stroke-width: 1.2; }
.n { font: 8.5px "Open Sans"; fill: #0f78c8; text-anchor: middle; }
.t { font: 700 14px "Open Sans"; fill: #1a7dc0; text-anchor: middle; }
.dots { margin: 11px 0 0 12px; }
.wells { margin-top: 17px; border-top: 1px solid #d8d6d4; padding: 10px 6px 0 4px; }
.wl { padding-left: 8px; line-height: 16px; }
.drop { border: 1px dashed #c0bebc; border-radius: 2px; background: #fff; }
.d1 { height: 28px; margin-top: 4px; padding-left: 10px; line-height: 28px; }
.d2 { height: 26px; margin-top: 6px; padding-left: 8px; line-height: 26px; }
.l2 { margin: 11px 0 4px; }
.opt { display: flex; justify-content: space-between; align-items: center; height: 26px; padding: 0 16px 0 8px; }
.data { width: 180px; flex: none; }
.search { display: flex; align-items: center; gap: 8px; width: 172px; height: 27px; margin: 7px 0 0 4px; padding-left: 7px; border: 1px solid #605e5c; border-radius: 2px; font-size: 13.5px; color: #484644; }
.tree { position: relative; padding-top: 10px; }
.tree .f, .tree .t { display: flex; align-items: center; height: 24px; width: 162px; margin-left: 5px; padding-top: 2px; font: 12px/22px "Open Sans", "Noto Sans CJK TC", sans-serif; fill: none; }
.tree .f { padding-left: 33px; }
.tree .t { padding-left: 2px; }
.tree i, .tree em, .tree .t svg, .tree .dc, .tree .more { margin-bottom: 2px; }
.tree .t svg { width: 12px; height: 12px; margin-right: 4px; }
.tree .t svg + svg { margin-right: 6px; }
.tree i { width: 12px; height: 12px; border: 1px solid #8a8886; border-radius: 2px; }
.tree em { width: 14px; margin-right: 4px; margin-left: 8px; }
.tree .date { padding-left: 17px; }
.tree .dc { margin-right: 4px; }
.hov { background: #ebe9e8; }
.tree .more { margin-left: auto; margin-right: 3px; }
.thumb { position: absolute; left: 168px; top: 72px; width: 8px; height: 563px; background: #c8c8c8; }

/* status bar */
.status { display: flex; justify-content: space-between; align-items: center; height: 23px; border-top: 1px solid #dddbd9; padding: 2px 5px 0 5px; color: #3b3a39; }
.sr { display: flex; align-items: center; }
.pct { margin: 0 15px 0 15px; }
.sr span:last-child { margin-left: 14px; }
```
